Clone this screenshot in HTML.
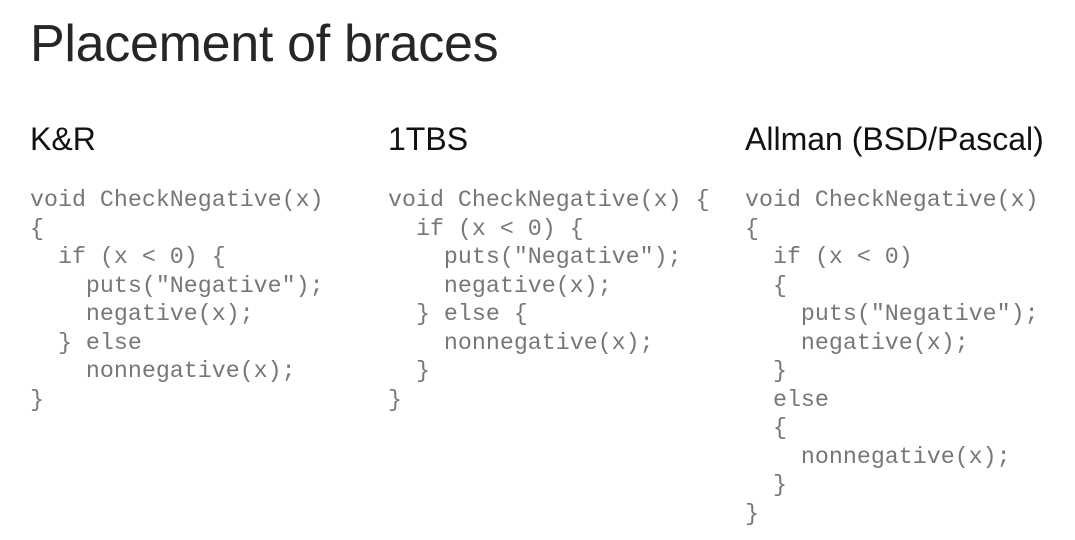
<!DOCTYPE html>
<html><head><meta charset="utf-8"><style>
body{margin:0;width:1075px;height:540px;background:#fff;position:relative;overflow:hidden;font-family:"Liberation Sans",sans-serif}
h1{position:absolute;left:30px;top:14px;margin:0;font-weight:normal;font-size:52px;color:#262626;letter-spacing:-0.3px}
.h{position:absolute;top:121px;font-size:32px;color:#111;margin:0}
pre{position:absolute;top:186px;margin:0;font-family:"Liberation Mono",monospace;font-size:23.3px;line-height:28.5px;color:#777}
</style></head><body>
<h1>Placement of braces</h1>
<div class="h" style="left:30px">K&amp;R</div>
<div class="h" style="left:388px">1TBS</div>
<div class="h" style="left:745px">Allman (BSD/Pascal)</div>
<pre style="left:30px">void CheckNegative(x)
{
  if (x &lt; 0) {
    puts("Negative");
    negative(x);
  } else
    nonnegative(x);
}</pre>
<pre style="left:388px">void CheckNegative(x) {
  if (x &lt; 0) {
    puts("Negative");
    negative(x);
  } else {
    nonnegative(x);
  }
}</pre>
<pre style="left:745px">void CheckNegative(x)
{
  if (x &lt; 0)
  {
    puts("Negative");
    negative(x);
  }
  else
  {
    nonnegative(x);
  }
}</pre>
</body></html>
